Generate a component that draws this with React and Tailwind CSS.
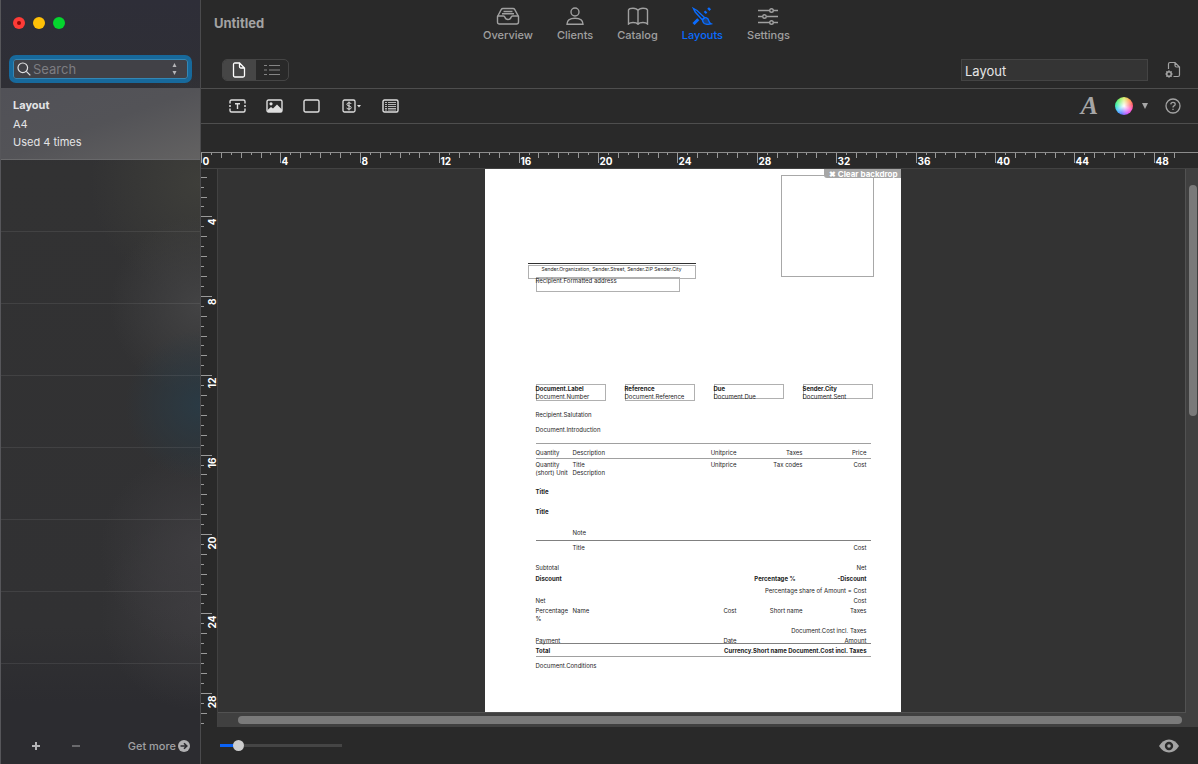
import React from 'react';

const UNIT = 19.85;

function Ruler({ vertical, start, end, origin }) {
  const ticks = [];
  for (let i = start; i <= end; i++) {
    const pos = Math.round(origin + (i * UNIT) / 2) + 0.5;
    const major = i % 8 === 0;
    const size = major ? 11 : i % 2 === 0 ? 6 : 3;
    ticks.push({ i, pos, major, size, label: i / 2 });
  }
  return (
    <svg className="block h-full w-full" aria-hidden="true">
      {ticks.map((t) => (
        <g key={t.i}>
          {vertical ? (
            <path d={`M0 ${t.pos}h${t.size}`} stroke="#9a9a9a" />
          ) : (
            <path d={`M${t.pos} 0v${t.size - 1}`} stroke="#9a9a9a" />
          )}
          {t.major && (
            <text
              className="font-['Inter',sans-serif] text-[10px] font-bold"
              fill="#ffffff"
              textAnchor={vertical ? 'end' : 'start'}
              transform={vertical ? `translate(15 ${t.pos + 2}) rotate(-90)` : `translate(${t.pos + 1} 12)`}
            >
              {t.label}
            </text>
          )}
        </g>
      ))}
    </svg>
  );
}

const icons = {
  overview: (
    <>
      <path d="M1.5 9.5 5.2 2.6Q5.8 1.5 7 1.5h10q1.2 0 1.8 1.1L22.5 9.5V15q0 2-2 2h-17q-2 0-2-2z" />
      <path d="M1.5 9H7.500q1 0 1.300 1 .7 2.500 3.200 2.500t3.200-2.500q.3-1 1.300-1h6M7.500 4.500h9M6 6.800h12" />
    </>
  ),
  clients: (
    <>
      <circle cx="12" cy="5" r="4" />
      <path d="M4 17.2q0-6 8-6t8 6z" />
    </>
  ),
  catalog: (
    <path d="M12 3.400C11 1.600 9 1.200 7 1.200S3 1.700 2.500 3v14c1-1 2.500-1.500 4.500-1.500s4 .4 5 1.700c1-1.300 3-1.700 5-1.700s3.500.5 4.500 1.500V3C21 1.700 19 1.200 17 1.200S13 1.600 12 3.400zM12 3.400v13.500" />
  ),
  layouts: (
    <>
      <path d="M3.500 1.500 7 3.500l7.500 7-2.300 2.300L5.200 5z" />
      <path d="M12.500 12.800q1.500-2.800 4-2 2 .8 2.300 3 .4 2 2.400 3-4.500 1.200-7-.3-1.700-1.200-1.700-3.700z" fill="currentColor" fillOpacity="0.4" />
      <path d="M3.500 17 8.300 12.200M14.800 6l1.500-1.500" strokeWidth="3" />
      <path d="m18.300 2.900 1.700-1.700" strokeWidth="3" />
    </>
  ),
  settings: (
    <>
      <path d="M2 3.500h11.500M17.500 3.500H22M2 9.500h4.500M10.500 9.500H22M2 15.500h11.500M17.500 15.500H22" />
      <circle cx="15.5" cy="3.5" r="1.8" />
      <circle cx="8.5" cy="9.5" r="1.8" />
      <circle cx="15.5" cy="15.5" r="1.8" />
    </>
  ),
};

const tabs = [
  { id: 'overview', label: 'Overview' },
  { id: 'clients', label: 'Clients' },
  { id: 'catalog', label: 'Catalog' },
  { id: 'layouts', label: 'Layouts', active: true },
  { id: 'settings', label: 'Settings' },
];

function Sidebar() {
  return (
    <aside className="flex w-[201px] shrink-0 flex-col border-x border-l-[#56565a] border-r-[#4a4a4c] bg-[radial-gradient(circle_at_100%_53%,#2a3a44_0,transparent_75px),radial-gradient(circle_at_100%_40%,#434344_0,transparent_90px),radial-gradient(circle_at_100%_24%,#3e3e3a_0,transparent_110px),radial-gradient(circle_at_100%_72%,#3e3d40_0,transparent_100px),radial-gradient(circle_at_100%_80%,#3c3b3e_0,transparent_100px),linear-gradient(#2e2e38_0,#2f2f35_12%,#323233_22%,#313133_82%,#2c2c30_92%)]">
      {/* Window buttons */}
      <div className="flex gap-2 px-3 pt-[17px]">
        <button aria-label="Close" className="flex size-3 items-center justify-center rounded-full bg-[#fe3b37]">
          <span className="size-1 rounded-full bg-[#8d0804]" />
        </button>
        <button aria-label="Minimize" className="size-3 rounded-full bg-[#ffc107]" />
        <button aria-label="Zoom" className="size-3 rounded-full bg-[#05d52e]" />
      </div>

      <div className="px-2 pt-[26px] pb-[5px]">
        <label className="flex h-7 items-center gap-[2px] rounded-[7px] border-4 border-[#17699c] bg-[#414147] pr-[11px] pl-1 outline-1 -outline-offset-5 outline-[#3487b5]">
          <svg className="size-[14px] shrink-0" viewBox="0 0 14 14" fill="none" stroke="#e0e0e2" strokeWidth="1.2">
            <circle cx="5.8" cy="5.8" r="4.8" />
            <path d="m9.3 9.3 4 4" />
          </svg>
          <input
            type="search"
            aria-label="Search"
            placeholder="Search"
            className="w-full min-w-0 bg-transparent text-[13px] leading-4 text-white outline-none placeholder:text-[#7d7d82]"
          />
          <svg className="h-3 w-[5px] shrink-0" viewBox="0 0 5 12" fill="#b5b5b8">
            <path d="M2.5 0 4.5 4h-4zM2.5 12l2-4h-4z" />
          </svg>
        </label>
      </div>

      <ul className="flex flex-1 flex-col">
        <li className="h-[72px] border-b border-[#69696b] bg-linear-to-br from-[#515157] via-[#535357] to-[#636262] pt-2 pl-3 text-[11px] text-[#e4e4e6]">
          <p className="leading-[18px] font-bold">Layout</p>
          <p className="pt-px leading-[18px]">A4</p>
          <p className="leading-[18px]">Used 4 times</p>
        </li>
        {[1, 2, 3, 4, 5, 6, 7].map((row) => (
          <li key={row} className="h-[72px] border-b border-white/8" />
        ))}
      </ul>

      <div className="flex h-9 items-center pr-[10px] pl-[30px] text-[#a0a0a3]">
        <button aria-label="Add layout">
          <svg className="size-[10px]" viewBox="0 0 10 10" stroke="#b4b4b6" strokeWidth="2">
            <path d="M5 1v8M1 5h8" />
          </svg>
        </button>
        <button aria-label="Remove layout" className="ml-[30px]">
          <svg className="size-[10px]" viewBox="0 0 10 10" stroke="#69696c" strokeWidth="2">
            <path d="M1 5h8" />
          </svg>
        </button>
        <a href="#more" className="ml-auto flex items-center gap-[2px] text-[11px] leading-4 font-medium whitespace-nowrap">
          Get more
          <svg className="size-3" viewBox="0 0 12 12">
            <circle cx="6" cy="6" r="6" fill="#b0b0b2" />
            <path d="M2.5 6h6M6 3.2 8.8 6 6 8.8" fill="none" stroke="#2c2c30" strokeWidth="1.6" />
          </svg>
        </a>
      </div>
    </aside>
  );
}

function Header() {
  return (
    <header className="flex h-12 items-start pl-[13px]">
      <h1 className="w-[263px] pt-[14px] text-[13px] leading-[18px] font-bold text-[#a3a3a3]">Untitled</h1>
      <nav className="flex gap-3 pt-[7px]">
        {tabs.map((tab) => (
          <button
            key={tab.id}
            className={`flex flex-col items-center px-[6px] text-[11px] leading-4 font-medium ${tab.active ? 'text-[#0a6cff]' : 'text-[#a0a0a0]'}`}
          >
            <svg className="mb-[2px] h-[18px] w-6" viewBox="0 0 24 18" fill="none" stroke="currentColor" strokeWidth="1.4">
              {icons[tab.id]}
            </svg>
            {tab.label}
          </button>
        ))}
      </nav>
    </header>
  );
}

function ViewBar() {
  return (
    <div className="flex h-[41px] items-start border-b border-[#4e4e4e] pt-[11px] pr-[17px] pl-[21px]">
      <div className="flex h-[22px] w-[67px] overflow-hidden rounded-[5px] border border-[#454545]">
        <button aria-label="Page view" className="flex w-[33px] items-center justify-center bg-[#464646] pr-px">
          <svg className="h-4 w-[14px]" viewBox="0 0 14 16" fill="none" stroke="#ffffff" strokeWidth="1.3">
            <path d="M1.5 2.500q0-1.500 1.500-1.500h4.500L12.500 6v7.500q0 1.500-1.500 1.500H3q-1.500 0-1.500-1.500zM7.500 1v3.500Q7.500 6 9 6h3.500" />
          </svg>
        </button>
        <button aria-label="List view" className="flex flex-1 items-center justify-center">
          <svg className="h-3 w-4" viewBox="0 0 16 12" stroke="#858585" strokeWidth="1.2">
            <path d="M0 1.5h3M5 1.5h11M0 6h3M5 6h11M0 10.5h3M5 10.5h11" />
          </svg>
        </button>
      </div>
      <input
        aria-label="Layout name"
        defaultValue="Layout"
        className="ml-auto h-[22px] w-[187px] border border-[#444444] bg-[#343434] px-[3px] pt-[2px] text-[13px] leading-4 text-[#e6e6e6] outline-none"
      />
      <button aria-label="Page settings" className="ml-[17px] pt-[2px]">
        <svg className="h-[18px] w-4" viewBox="0 0 16 18" fill="none" stroke="#a3a3a3" strokeWidth="1.2">
          <path d="M3.500 8V3q0-1.500 1.500-1.500h5L14.500 6v8q0 1.500-1.500 1.500H8.500M10 1.500V4.500Q10 6 11.500 6h3" />
          <circle cx="4" cy="13" r="2.3" strokeWidth="1.6" />
          <path d="M4 9.300v1.200M4 15.500v1.200M.3 13h1.200M6.500 13h1.200M1.400 10.400l.8.8M5.800 14.800l.8.8M1.400 15.600l.8-.8M5.800 11.200l.8-.8" />
        </svg>
      </button>
    </div>
  );
}

function InsertBar() {
  return (
    <div className="flex h-[35px] items-center gap-[22px] border-b border-[#4e4e4e] pr-[17px] pl-7">
      <div className="flex items-center gap-5">
        <button aria-label="Insert text">
          <svg className="h-[14px] w-[17px]" viewBox="0 0 17 14" fill="none" stroke="#dedede" strokeWidth="1.4">
            <path d="M1 4.500V2.500Q1 1 2.500 1h12Q16 1 16 2.500v2M1 9.500v2Q1 13 2.500 13h12q1.500 0 1.500-1.500v-2M0 7h2M15 7h2" />
            <path d="M6 4.700h5M8.500 4.500v5.500" />
          </svg>
        </button>
        <button aria-label="Insert image">
          <svg className="h-[14px] w-[17px]" viewBox="0 0 17 14" fill="none" stroke="#dedede" strokeWidth="1.4">
            <rect x="1" y="1" width="15" height="12" rx="1.5" />
            <circle cx="5" cy="4.800" r="1.600" fill="#dedede" stroke="none" />
            <path d="M1.500 11 5 8l2 1.500L11 5.500l5 5V13H1.500z" fill="#dedede" stroke="none" />
          </svg>
        </button>
        <button aria-label="Insert box">
          <svg className="h-[14px] w-[17px]" viewBox="0 0 17 14" fill="none" stroke="#dedede" strokeWidth="1.4">
            <rect x="1" y="1" width="15" height="12" rx="1.5" />
          </svg>
        </button>
      </div>
      <div className="flex items-center gap-5">
        <button aria-label="Insert amount" className="flex items-center">
          <svg className="h-[14px] w-5" viewBox="0 0 20 14" fill="none" stroke="#dedede" strokeWidth="1.3">
            <rect x="1" y="1" width="12" height="12" rx="1.5" />
            <path d="M9.200 5Q9 3.800 7 3.800T4.900 5.300Q4.900 6.600 7 6.900t2.200 1.700Q9.200 10.100 7 10.100T4.800 8.800M7 2.600v8.800" strokeWidth="1" />
            <path d="M15 6h4l-2 2.500z" fill="#dedede" stroke="none" />
          </svg>
        </button>
        <button aria-label="Insert table">
          <svg className="h-[14px] w-[17px]" viewBox="0 0 17 14" fill="none" stroke="#dedede" strokeWidth="1.4">
            <rect x="1" y="1" width="15" height="12" rx="1.5" />
            <path d="M3 3.500h2M6 3.500h8M3 5.500h2M6 5.500h8M3 7.500h2M6 7.500h8M3 9.500h2M6 9.500h8M3 11h2M6 11h8" stroke="#b5b5b5" strokeWidth="1" />
          </svg>
        </button>
      </div>
      <div className="ml-auto flex items-center gap-[17px]">
        <button
          aria-label="Fonts"
          className="font-['Liberation_Serif',serif] text-[26px] leading-6 font-bold text-[#a6a6a6] italic"
        >
          A
        </button>
        <button aria-label="Colors" className="flex items-center gap-[9px]">
          <span className="size-[18px] rounded-full bg-[radial-gradient(circle,#ffffff_0,transparent_70%),conic-gradient(#d8f06a,#ffa04a,#ff5560,#ff50d0,#c050ff,#5078ff,#40c8ff,#30f0a0,#70f060,#d8f06a)]" />
          <svg className="h-[6px] w-[6px]" viewBox="0 0 6 6" fill="#a6a6a6">
            <path d="M0 0h6L3 6z" />
          </svg>
        </button>
        <button aria-label="Help">
          <svg className="size-4" viewBox="0 0 16 16" fill="none" stroke="#a3a3a3" strokeWidth="1.3">
            <circle cx="8" cy="8" r="7" />
            <path d="M5.800 6.400Q5.900 4.400 8 4.400t2.200 1.800Q10.200 7.300 9 7.900 8 8.400 8 9.400M8 10.700v1.300" />
          </svg>
        </button>
      </div>
    </div>
  );
}

const references = [
  { title: 'Document.Label', value: 'Document.Number', box: 'w-[70px] h-[17px]' },
  { title: 'Reference', value: 'Document.Reference', box: 'w-[70px] h-[17px]' },
  { title: 'Due', value: 'Document.Due', box: 'w-[70px] h-[15px]' },
  { title: 'Sender.City', value: 'Document.Sent', box: 'w-[70px] h-[15px]' },
];

// One table line: cells are [first, second, amount, tax, price]
const lines = [
  { cells: ['Quantity', 'Description', 'Unitprice', 'Taxes', 'Price'], style: 'h-4 border-t border-b border-[#a0a0a0] pt-[5px]' },
  { cells: ['Quantity (short) Unit', 'Title\nDescription', 'Unitprice', 'Tax codes', 'Cost'], style: 'h-7 pt-[2px]' },
  { cells: ['Title'], style: 'h-5 pt-[1px] font-bold' },
  { cells: ['Title'], style: 'h-[22px] pt-[1px] font-bold' },
  { cells: ['', 'Note'], style: 'h-3 border-b border-[#808080]' },
  { cells: ['', 'Title', '', '', 'Cost'], style: 'h-[23px] pt-[3px]' },
  { cells: ['Subtotal', '', '', '', 'Net'], style: 'h-[11px]' },
  { cells: ['Discount', '', '', 'Percentage %', '-Discount'], style: 'h-3 font-bold', taxCell: 'pr-[7px]' },
  { cells: ['', '', '', '', 'Percentage share of Amount = Cost'], style: 'h-[10px]' },
  { cells: ['Net', '', '', '', 'Cost'], style: 'h-[10px]' },
  { cells: ['Percentage %', 'Name', 'Cost', 'Short name', 'Taxes'], style: 'h-5' },
  { cells: ['', '', '', '', 'Document.Cost incl. Taxes'], style: 'h-[10px]' },
  { cells: ['Payment', '', 'Date', '', 'Amount'], style: 'h-[7px] border-b border-[#808080]' },
  { cells: ['Total', '', '', '', 'Currency.Short name Document.Cost incl. Taxes'], style: 'h-[13px] border-b border-[#a0a0a0] pt-[3px] font-bold' },
];

function Sheet() {
  return (
    <div className="relative w-[416px] shrink-0 bg-white pl-[51px] font-['Inter',sans-serif] text-[6px] leading-[8px] text-[#1c1c1c]">
      {/* Freely placed objects */}
      <div className="absolute top-[6px] left-[296px] h-[102px] w-[93px] border border-[#a8a8a8]" />
      <button className="absolute top-0 right-0 h-[9px] rounded-bl-[3px] bg-[#a6a6a6] pr-[3px] pl-[5px] text-[8px] leading-[8px] font-bold whitespace-nowrap text-white">
        ✖ Clear backdrop
      </button>
      <div className="absolute top-[94px] left-[43px] h-px w-[168px] bg-[#303030]" />
      <div className="absolute top-[96px] left-[43px] h-[14px] w-[168px] border border-[#b0b0b0] text-center text-[5px] leading-[7px]">
        Sender.Organization, Sender.Street, Sender.ZIP Sender.City
      </div>
      <div className="absolute top-[108px] left-[51px] h-[15px] w-[144px] border border-[#b0b0b0]">
        <span className="-ml-px block leading-[6px]">Recipient.Formatted address</span>
      </div>

      <div className="flex gap-[19px] pt-[215px]">
        {references.map((ref) => (
          <div key={ref.title} className={`border border-[#b0b0b0] leading-[7px] whitespace-nowrap ${ref.box}`}>
            <p className="-ml-px font-bold">{ref.title}</p>
            <p className="-ml-px pt-px">{ref.value}</p>
          </div>
        ))}
      </div>
      <p className="pt-[10px]">Recipient.Salutation</p>
      <p className="pt-[7px]">Document.Introduction</p>

      <table className="mt-[9px] block w-[335px]">
        <tbody className="block">
          {lines.map((line, i) => (
            <tr
              key={i}
              className={`grid grid-cols-[37px_110px_54px_66px_64px] ${line.style}`}
            >
              {line.cells.map((cell, c) => (
                <td
                  key={c}
                  className={`p-0 ${c > 1 ? 'flex justify-end whitespace-nowrap' : 'whitespace-pre-line'} ${(c === 3 && line.taxCell) || ''}`}
                >
                  {cell}
                </td>
              ))}
            </tr>
          ))}
        </tbody>
      </table>
      <p className="pt-[5px] pb-[41px]">Document.Conditions</p>
    </div>
  );
}

export default function App() {
  return (
    <div className="flex min-h-screen bg-[#292929] font-['Inter',sans-serif]">
      <Sidebar />
      <main className="flex min-w-0 flex-1 flex-col">
        <Header />
        <ViewBar />
        <InsertBar />
        <div className="h-7" />

        <div className="h-4 border-t border-[#8c8c8c] pr-[14px]">
          <Ruler start={0} end={99} origin={0} />
        </div>

        <div className="flex flex-1 border-t border-[#424242]">
          <div className="w-4 shrink-0">
            <Ruler vertical start={4} end={59} origin={-32} />
          </div>
          <div className="flex min-w-0 flex-1 flex-col border-l border-[#424242] bg-[#404040]">
            <div className="flex flex-1">
              <div className="flex min-w-0 flex-1 justify-center overflow-hidden border-r border-b border-[#525252] bg-[#333333] pr-[18px]">
                <Sheet />
              </div>
              <div className="w-3 shrink-0 pt-4 pl-[3px]">
                <div className="h-[231px] w-2 rounded-full bg-[#7a7a7a]" />
              </div>
            </div>
            <div className="h-[14px] pt-[3px] pr-4 pl-5">
              <div className="h-2 rounded-full bg-[#7a7a7a]" />
            </div>
          </div>
        </div>

        <footer className="flex h-[37px] items-center justify-between px-[19px]">
          <input
            type="range"
            aria-label="Zoom"
            min="0"
            max="100"
            defaultValue="12"
            className="h-3 w-[122px] appearance-none bg-[linear-gradient(90deg,#0a62f5_16px,#454545_16px)] bg-[length:100%_3px] bg-center bg-no-repeat [&::-webkit-slider-thumb]:size-[11px] [&::-webkit-slider-thumb]:appearance-none [&::-webkit-slider-thumb]:rounded-full [&::-webkit-slider-thumb]:bg-[#cdcdcd]"
          />
          <button aria-label="Preview">
            <svg className="h-[14px] w-5" viewBox="0 0 20 14">
              <path d="M0 7Q4 .5 10 .5T20 7Q16 13.5 10 13.5T0 7z" fill="#a3a3a3" />
              <circle cx="10" cy="7" r="3" fill="none" stroke="#292929" strokeWidth="2.4" />
            </svg>
          </button>
        </footer>
      </main>
    </div>
  );
}
